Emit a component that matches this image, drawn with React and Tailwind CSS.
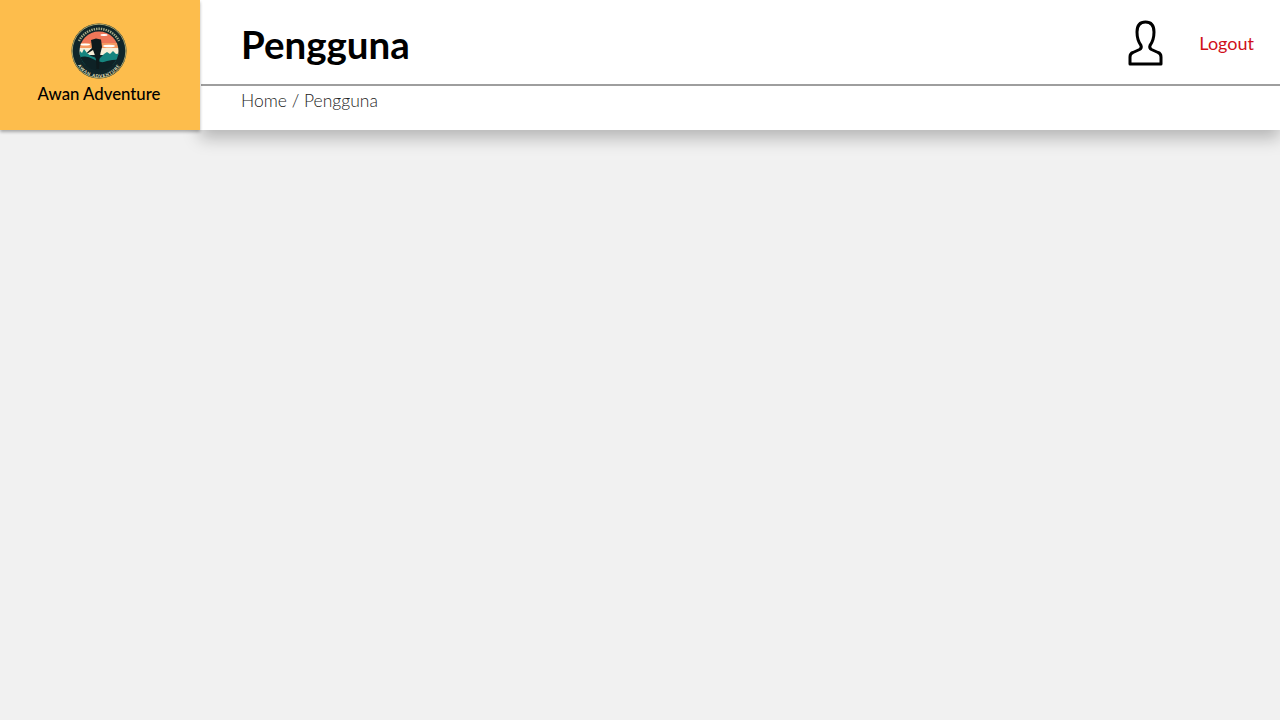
import React from "react";

const Logo = () => (
  <svg width="56" height="56" viewBox="0 0 56 56">
    <defs>
      <clipPath id="scene">
        <circle cx="28" cy="28" r="19.5" />
      </clipPath>
      <path id="bottomArc" d="M3.5 30 A24.5 24.5 0 0 0 52.5 30" />
    </defs>
    <circle cx="28" cy="28" r="27.5" fill="#10262a" />
    <circle cx="28" cy="28" r="26.8" fill="none" stroke="#e8dc8c" strokeWidth="0.7" />
    <path d="M8 18 A22.5 22.5 0 0 1 48 18" fill="none" stroke="#a9ad88" strokeWidth="2.4" strokeDasharray="1.4 1" />
    <text fontSize="4.2" fontWeight="700" fill="#f6efc9" letterSpacing="0.8" fontFamily="Lato, sans-serif">
      <textPath href="#bottomArc" startOffset="50%" textAnchor="middle">AWAN ADVENTURE</textPath>
    </text>
    <g clipPath="url(#scene)">
      <rect x="0" y="8" width="56" height="13" fill="#ee7658" />
      <rect x="0" y="20" width="56" height="5" fill="#f59a62" />
      <rect x="0" y="25" width="56" height="7" fill="#f7efd8" />
      <path d="M6 33 L9 28 L11 30 L13 26 L16 30 L20 33 L28 36 L33 31 L36 29 L39 31 L42 28 L45 31 L50 30 L50 42 L6 42 Z" fill="#16857f" />
      <path d="M6 36 Q14 31 22 36 Q30 41 36 38 Q44 36 50 37 L50 50 L6 50 Z" fill="#0e2226" />
      <ellipse cx="14" cy="21.5" rx="5" ry="1" fill="#fff" />
      <ellipse cx="38" cy="23" rx="6" ry="1.3" fill="#fff" />
      <ellipse cx="33" cy="12" rx="3.5" ry="0.9" fill="#fff" />
    </g>
    <path d="M20 17 L25 15.5 L30 16.5 L31 24 L29.5 30 L28.5 36 L28 46 L25.5 46 L25 37 L23.5 31 L22 27 L16.5 30.5 L16 29.5 L21 25 Z" fill="#0e1a1c" />
  </svg>
);

const UserIcon = () => (
  <svg width="36" height="46" viewBox="0 0 36 46" fill="none" stroke="#000" strokeWidth="3" strokeLinejoin="round">
    <path d="M3 44 V37 Q3 33.5 6 32.5 L12.5 29.5 Q15 28 14 25.5 Q10 20 10 12 Q10 2 18.5 2 Q27 2 27 12 Q27 20 23 25.5 Q22 28 24.5 29.5 L31 32.5 Q34 33.5 34 37 V44 Z" />
  </svg>
);

const App = () => {
  return (
    <div className="min-h-[720px] bg-[#f1f1f1] font-['Lato',sans-serif]">
      <div className="flex h-[130px] items-stretch">
        <div className="w-[200px] flex flex-col items-center pt-[23px] pr-[2px] bg-[#fdbd4c] shadow-[0_2px_3px_rgba(0,0,0,0.3)] relative z-10">
          <Logo />
          <p className="mt-[3px] text-[16.75px] leading-[24px] font-medium text-black">Awan Adventure</p>
        </div>
        <div className="flex-1 bg-white shadow-[0_8px_16px_rgba(0,0,0,0.25)]">
          <div className="ml-px h-[86px] border-b-2 border-[#9e9e9e] pl-10 pr-[26px] flex items-center justify-between">
            <h1 className="mt-[4px] text-[38.5px] font-bold leading-none text-black">Pengguna</h1>
            <div className="flex items-center gap-[36px]">
              <div className="mt-[2px]">
                <UserIcon />
              </div>
              <button className="mt-[2px] text-[18px] text-[#d0101a]">Logout</button>
            </div>
          </div>
          <p className="pl-[41px] text-[17.5px] font-light leading-[29px] text-[#222]">Home / Pengguna</p>
        </div>
      </div>
    </div>
  );
};

export default App;
